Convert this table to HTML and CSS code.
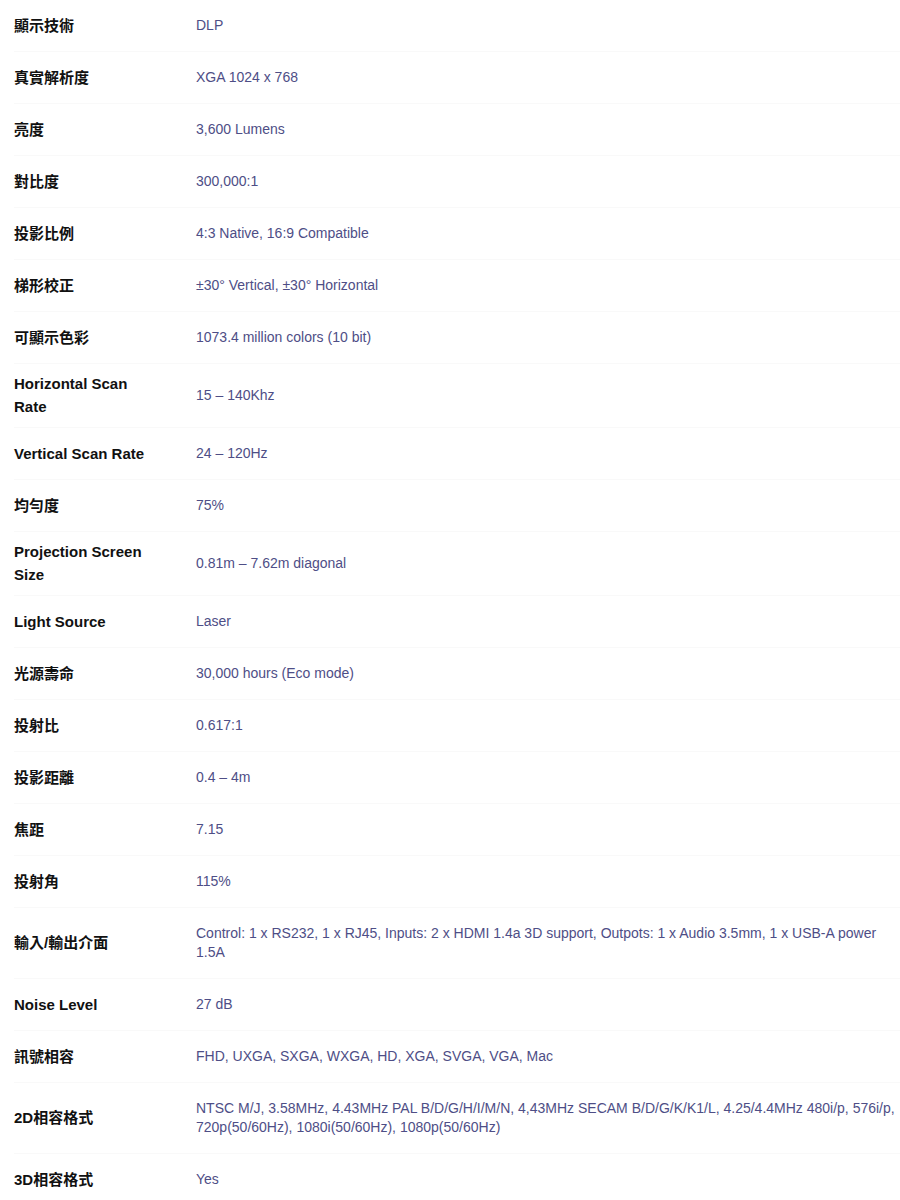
FILE: index.html
```html
<!DOCTYPE html>
<html lang="zh-Hant">
<head>
  <meta charset="UTF-8">
  <meta name="viewport" content="width=device-width, initial-scale=1.0">
  <title>規格</title>
  <link rel="stylesheet" href="styles.css">
</head>
<body>
  <table class="spec-table">
    <tbody>
      <tr><th>顯示技術</th><td>DLP</td></tr>
      <tr><th>真實解析度</th><td>XGA 1024 x 768</td></tr>
      <tr><th>亮度</th><td>3,600 Lumens</td></tr>
      <tr><th>對比度</th><td>300,000:1</td></tr>
      <tr><th>投影比例</th><td>4:3 Native, 16:9 Compatible</td></tr>
      <tr><th>梯形校正</th><td>±30° Vertical, ±30° Horizontal</td></tr>
      <tr><th>可顯示色彩</th><td>1073.4 million colors (10 bit)</td></tr>
      <tr><th>Horizontal Scan Rate</th><td>15 – 140Khz</td></tr>
      <tr><th>Vertical Scan Rate</th><td>24 – 120Hz</td></tr>
      <tr><th>均勻度</th><td>75%</td></tr>
      <tr><th>Projection Screen Size</th><td>0.81m – 7.62m diagonal</td></tr>
      <tr><th>Light Source</th><td>Laser</td></tr>
      <tr><th>光源壽命</th><td>30,000 hours (Eco mode)</td></tr>
      <tr><th>投射比</th><td>0.617:1</td></tr>
      <tr><th>投影距離</th><td>0.4 – 4m</td></tr>
      <tr><th>焦距</th><td>7.15</td></tr>
      <tr><th>投射角</th><td>115%</td></tr>
      <tr><th>輸入/輸出介面</th><td>Control: 1 x RS232, 1 x RJ45, Inputs: 2 x HDMI 1.4a 3D support, Outpots: 1 x Audio 3.5mm, 1 x USB-A power 1.5A</td></tr>
      <tr><th>Noise Level</th><td>27 dB</td></tr>
      <tr><th>訊號相容</th><td>FHD, UXGA, SXGA, WXGA, HD, XGA, SVGA, VGA, Mac</td></tr>
      <tr><th>2D相容格式</th><td>NTSC M/J, 3.58MHz, 4.43MHz PAL B/D/G/H/I/M/N, 4,43MHz SECAM B/D/G/K/K1/L, 4.25/4.4MHz 480i/p, 576i/p, 720p(50/60Hz), 1080i(50/60Hz), 1080p(50/60Hz)</td></tr>
      <tr><th>3D相容格式</th><td>Yes</td></tr>
    </tbody>
  </table>
</body>
</html>
```

FILE: styles.css
```css
:root {
  --label-color: #111111;
  --value-color: #4e4e86;
  --row-line: #f9f9f9;
}

body {
  margin: 0;
  padding: 0 0 0 14px;
  background-color: #ffffff;
  font-family: 'Liberation Sans', Arial, 'Noto Sans CJK TC', sans-serif;
}

.spec-table {
  width: 100%;
  border-collapse: collapse;
  table-layout: fixed;
}

.spec-table tr {
  border-bottom: 1px solid var(--row-line);
}

.spec-table th {
  width: 140px;
  padding: 8px 42px 9px 0;
  text-align: left;
  vertical-align: middle;
  font-size: 15px;
  line-height: 23px;
  font-weight: 700;
  color: var(--label-color);
}

.spec-table td {
  padding: 16px 0;
  vertical-align: middle;
  font-size: 14px;
  line-height: 19px;
  font-weight: 400;
  color: var(--value-color);
}
```
